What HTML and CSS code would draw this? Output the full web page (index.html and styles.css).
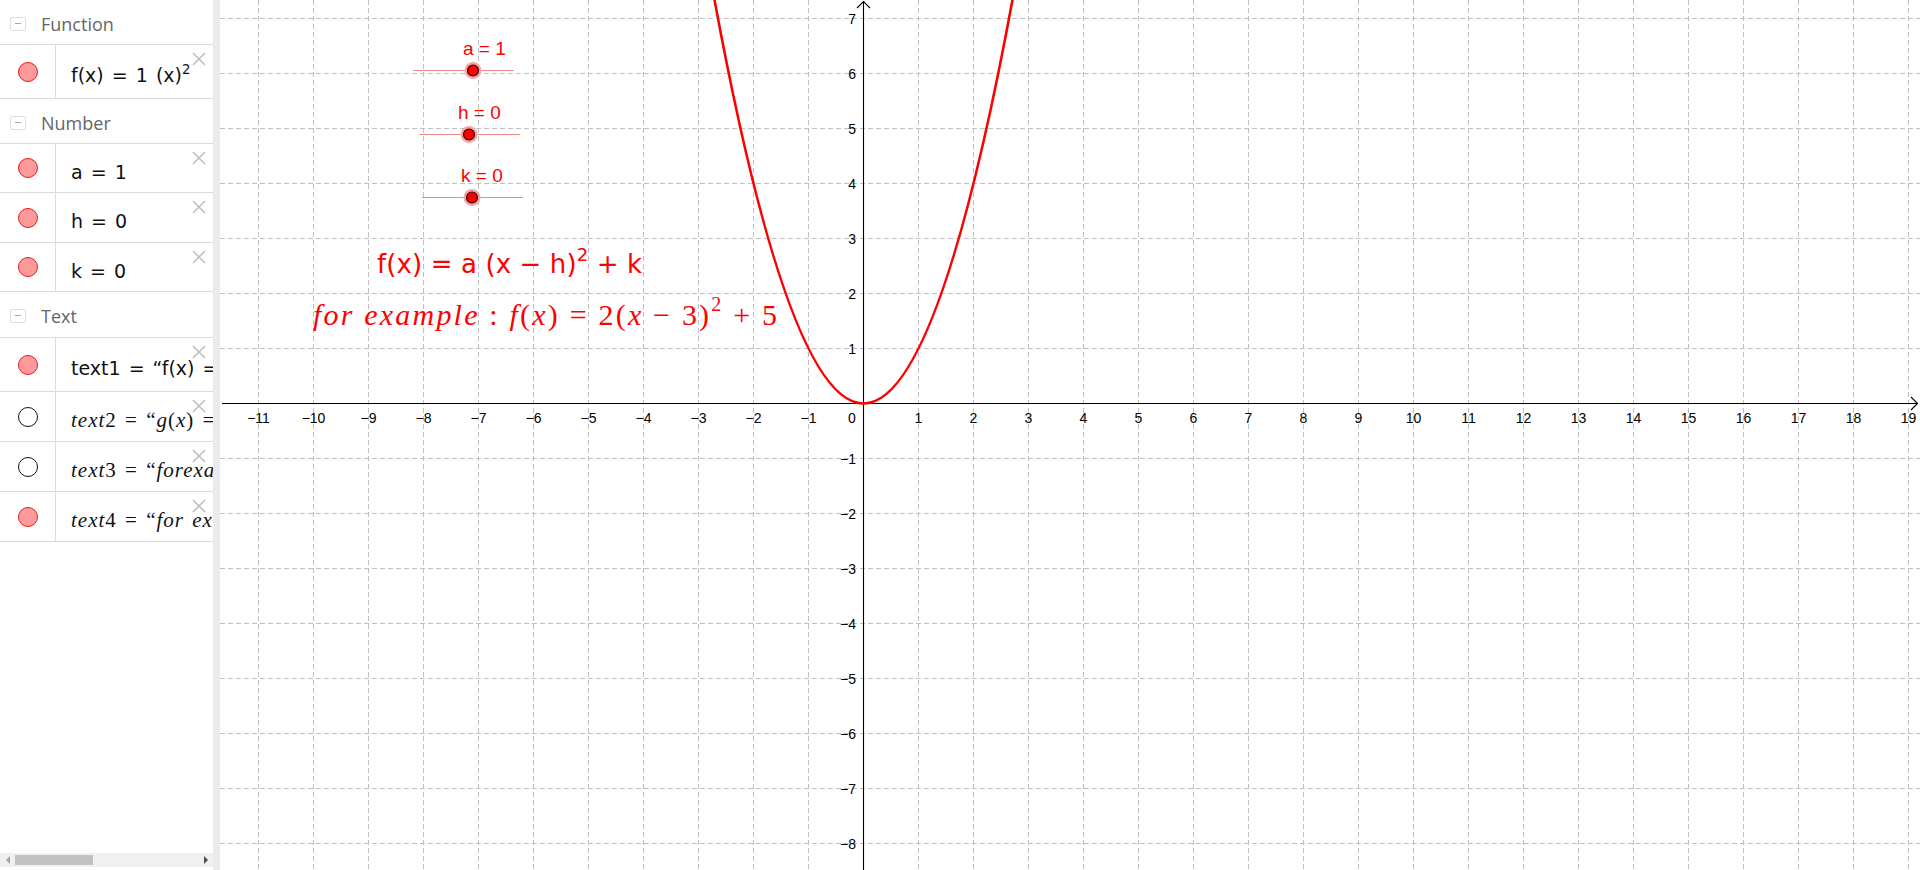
FILE: index.html
```html
<!DOCTYPE html>
<html lang="en">
<head>
<meta charset="utf-8">
<title>Vertex form</title>
<link rel="stylesheet" href="styles.css">
</head>
<body>
<div class="app">
  <aside class="algebra">
    <div class="av-list">
      <div class="group-head"><span class="toggle"></span><span class="group-title">Function</span></div>
      <div class="item tall">
        <div class="marble"><span class="dot"></span></div>
        <div class="formula">f(x) = 1 (x)<span class="sup">2</span></div>
        <svg class="close" viewBox="0 0 14 14"><path d="M1 1L13 13M13 1L1 13"/></svg>
      </div>
      <div class="group-head"><span class="toggle"></span><span class="group-title">Number</span></div>
      <div class="item compact">
        <div class="marble"><span class="dot"></span></div>
        <div class="formula">a = 1</div>
        <svg class="close" viewBox="0 0 14 14"><path d="M1 1L13 13M13 1L1 13"/></svg>
      </div>
      <div class="item">
        <div class="marble"><span class="dot"></span></div>
        <div class="formula">h = 0</div>
        <svg class="close" viewBox="0 0 14 14"><path d="M1 1L13 13M13 1L1 13"/></svg>
      </div>
      <div class="item compact">
        <div class="marble"><span class="dot"></span></div>
        <div class="formula">k = 0</div>
        <svg class="close" viewBox="0 0 14 14"><path d="M1 1L13 13M13 1L1 13"/></svg>
      </div>
      <div class="group-head wide"><span class="toggle"></span><span class="group-title">Text</span></div>
      <div class="item tall">
        <div class="marble"><span class="dot"></span></div>
        <div class="formula">text1 = “f(x) = a (x − h)<span class="sup">2</span> + k”</div>
        <svg class="close" viewBox="0 0 14 14"><path d="M1 1L13 13M13 1L1 13"/></svg>
      </div>
      <div class="item">
        <div class="marble"><span class="dot off"></span></div>
        <div class="formula serif">text<span class="up">2 = “</span>g<span class="up">(</span>x<span class="up">) = </span>a<span class="up">(</span>x <span class="up">−</span> h<span class="up">)</span></div>
        <svg class="close" viewBox="0 0 14 14"><path d="M1 1L13 13M13 1L1 13"/></svg>
      </div>
      <div class="item">
        <div class="marble"><span class="dot off"></span></div>
        <div class="formula serif">text<span class="up">3 = “</span>forexample</div>
        <svg class="close" viewBox="0 0 14 14"><path d="M1 1L13 13M13 1L1 13"/></svg>
      </div>
      <div class="item">
        <div class="marble"><span class="dot"></span></div>
        <div class="formula serif">text<span class="up">4 = “</span>for example</div>
        <svg class="close" viewBox="0 0 14 14"><path d="M1 1L13 13M13 1L1 13"/></svg>
      </div>
    </div>
    <div class="hscroll">
      <span class="arrow-box"><span class="arrow left"></span></span>
      <span class="thumb"></span>
      <span class="spacer"></span>
      <span class="arrow-box"><span class="arrow right"></span></span>
    </div>
  </aside>
  <div class="splitter"></div>
  <main class="graphics">
    <svg class="canvas" width="1700" height="870" viewBox="0 0 1700 870">
      <path class="grid" d="M38.5 0V870M93.5 0V870M148.5 0V870M203.5 0V870M258.5 0V870M313.5 0V870M368.5 0V870M423.5 0V870M478.5 0V870M533.5 0V870M588.5 0V870M698.5 0V870M753.5 0V870M808.5 0V870M863.5 0V870M918.5 0V870M973.5 0V870M1028.5 0V870M1083.5 0V870M1138.5 0V870M1193.5 0V870M1248.5 0V870M1303.5 0V870M1358.5 0V870M1413.5 0V870M1468.5 0V870M1523.5 0V870M1578.5 0V870M1633.5 0V870M1688.5 0V870"/>
      <path class="grid" d="M0 18.5H1700M0 73.5H1700M0 128.5H1700M0 183.5H1700M0 238.5H1700M0 293.5H1700M0 348.5H1700M0 458.5H1700M0 513.5H1700M0 568.5H1700M0 623.5H1700M0 678.5H1700M0 733.5H1700M0 788.5H1700M0 843.5H1700"/>
      <path class="axis" d="M2 403.5H1697M1691 397L1697.5 403.5L1691 410M643.5 870V1.5M637 8L643.5 1.5L650 8"/>
      <g class="tick tick-x">
        <text x="38.5" y="423">−11</text>
        <text x="93.5" y="423">−10</text>
        <text x="148.5" y="423">−9</text>
        <text x="203.5" y="423">−8</text>
        <text x="258.5" y="423">−7</text>
        <text x="313.5" y="423">−6</text>
        <text x="368.5" y="423">−5</text>
        <text x="423.5" y="423">−4</text>
        <text x="478.5" y="423">−3</text>
        <text x="533.5" y="423">−2</text>
        <text x="588.5" y="423">−1</text>
        <text x="632" y="423">0</text>
        <text x="698.5" y="423">1</text>
        <text x="753.5" y="423">2</text>
        <text x="808.5" y="423">3</text>
        <text x="863.5" y="423">4</text>
        <text x="918.5" y="423">5</text>
        <text x="973.5" y="423">6</text>
        <text x="1028.5" y="423">7</text>
        <text x="1083.5" y="423">8</text>
        <text x="1138.5" y="423">9</text>
        <text x="1193.5" y="423">10</text>
        <text x="1248.5" y="423">11</text>
        <text x="1303.5" y="423">12</text>
        <text x="1358.5" y="423">13</text>
        <text x="1413.5" y="423">14</text>
        <text x="1468.5" y="423">15</text>
        <text x="1523.5" y="423">16</text>
        <text x="1578.5" y="423">17</text>
        <text x="1633.5" y="423">18</text>
        <text x="1688.5" y="423">19</text>
      </g>
      <g class="tick tick-y">
        <text x="636" y="24">7</text>
        <text x="636" y="79">6</text>
        <text x="636" y="134">5</text>
        <text x="636" y="189">4</text>
        <text x="636" y="244">3</text>
        <text x="636" y="299">2</text>
        <text x="636" y="354">1</text>
        <text x="636" y="464">−1</text>
        <text x="636" y="519">−2</text>
        <text x="636" y="574">−3</text>
        <text x="636" y="629">−4</text>
        <text x="636" y="684">−5</text>
        <text x="636" y="739">−6</text>
        <text x="636" y="794">−7</text>
        <text x="636" y="849">−8</text>
      </g>
      <path class="curve" d="M489.5 -27.7Q643.5 834.7 797.5 -27.7"/>
      <g class="slider">
        <line class="track" x1="193" y1="70.5" x2="294" y2="70.5"/>
        <circle class="halo" cx="253" cy="70.5" r="8.5"/>
        <circle class="knob" cx="253" cy="70.5" r="5.5"/>
        <text class="slider-label" x="243" y="55">a = 1</text>
      </g>
      <g class="slider">
        <line class="track" x1="199" y1="134.5" x2="300" y2="134.5"/>
        <circle class="halo" cx="249" cy="134.5" r="8.5"/>
        <circle class="knob" cx="249" cy="134.5" r="5.5"/>
        <text class="slider-label" x="238" y="119">h = 0</text>
      </g>
      <g class="slider">
        <line class="track" x1="202" y1="197.5" x2="303" y2="197.5"/>
        <circle class="halo" cx="252" cy="197.5" r="8.5"/>
        <circle class="knob" cx="252" cy="197.5" r="5.5"/>
        <text class="slider-label" x="241" y="182">k = 0</text>
      </g>
      <text class="formula-sans" x="157" y="273" textLength="265" lengthAdjust="spacing">f(x) = a (x − h)<tspan class="sup-svg" dy="-12">2</tspan><tspan dy="12"> + k</tspan></text>
      <text class="formula-serif" x="93" y="325" textLength="464" lengthAdjust="spacing">for example <tspan class="up">:</tspan> f<tspan class="up">(</tspan>x<tspan class="up">) = 2(</tspan>x<tspan class="up"> − 3)</tspan><tspan class="up sup-serif" dy="-14">2</tspan><tspan class="up" dy="14"> + 5</tspan></text>
    </svg>
  </main>
</div>
</body>
</html>
```
FILE: styles.css
```css
html, body {
  margin: 0;
  padding: 0;
  height: 100%;
}

body {
  font-family: "DejaVu Sans", sans-serif;
  background: #fff;
  overflow: hidden;
}

.app {
  display: flex;
  width: 1920px;
  height: 870px;
}

/* ---------- Algebra view ---------- */
.algebra {
  width: 213px;
  flex: none;
  display: flex;
  flex-direction: column;
  background: #fff;
}

.av-list {
  flex: 1;
  overflow: hidden;
}

.group-head {
  height: 45px;
  box-sizing: border-box;
  border-bottom: 1px solid #dcdcdc;
  display: flex;
  align-items: center;
  gap: 15px;
  padding: 3px 0 0 10px;
}

.group-head.wide {
  height: 46px;
}

.toggle {
  position: relative;
  width: 16px;
  height: 14px;
  box-sizing: border-box;
  border: 1px solid #dedede;
  border-radius: 2px;
  flex: none;
}

.toggle::after {
  content: "";
  position: absolute;
  left: 4px;
  right: 4px;
  top: 5px;
  height: 1px;
  background: #aaa;
}

.group-title {
  font-family: "Open Sans", sans-serif;
  font-size: 18px;
  color: #666;
}

.item {
  position: relative;
  display: flex;
  height: 50px;
  box-sizing: border-box;
  border-bottom: 1px solid #dcdcdc;
  overflow: hidden;
}

.item.tall {
  height: 54px;
}

.item.compact {
  height: 49px;
}

.marble {
  width: 56px;
  flex: none;
  box-sizing: border-box;
  border-right: 1px solid #dcdcdc;
  display: flex;
  align-items: center;
  justify-content: center;
}

.dot {
  width: 20px;
  height: 20px;
  border-radius: 50%;
  box-sizing: border-box;
  border: 1px solid #e31b1b;
  background: #ff9a9a;
}

.dot.off {
  background: #fff;
  border-color: #111;
}

.formula {
  padding: 16px 0 0 15px;
  font-size: 19px;
  line-height: 24px;
  color: #111;
  white-space: nowrap;
  word-spacing: 2px;
}

.item.tall .formula {
  padding-top: 18px;
}

.formula.serif {
  font-family: "Liberation Serif", serif;
  font-style: italic;
  font-size: 21px;
  letter-spacing: 1px;
}

.up {
  font-style: normal;
}

.sup {
  font-size: 0.7em;
  vertical-align: 0.6em;
  line-height: 0;
}

.close {
  position: absolute;
  right: 7px;
  top: 7px;
  width: 14px;
  height: 14px;
  fill: none;
  stroke: #bdbdbd;
  stroke-width: 1.5;
}

.hscroll {
  height: 14px;
  margin-bottom: 3px;
  background: #f0f0f0;
  display: flex;
  align-items: center;
}

.arrow-box {
  width: 15px;
  height: 14px;
  flex: none;
  display: flex;
  align-items: center;
  justify-content: center;
}

.arrow {
  width: 0;
  height: 0;
  border-top: 4px solid transparent;
  border-bottom: 4px solid transparent;
}

.arrow.left {
  border-right: 4px solid #a3a3a3;
}

.arrow.right {
  border-left: 4px solid #505050;
}

.thumb {
  width: 78px;
  height: 10px;
  background: #c1c1c1;
  flex: none;
}

.spacer {
  flex: 1;
}

.splitter {
  width: 7px;
  flex: none;
  background: #ebebeb;
}

/* ---------- Graphics view ---------- */
.graphics {
  flex: 1;
  position: relative;
  overflow: hidden;
  background: #fff;
}

.canvas {
  display: block;
}

.grid {
  fill: none;
  stroke: #c0c0c0;
  stroke-width: 1;
  stroke-dasharray: 5 3;
}

.axis {
  fill: none;
  stroke: #000;
  stroke-width: 1.1;
}

.tick {
  font-family: "Liberation Sans", Arial, sans-serif;
  font-size: 14px;
  fill: #000;
}

.tick-x {
  text-anchor: middle;
}

.tick-y {
  text-anchor: end;
}

.curve {
  fill: none;
  stroke: #ff0000;
  stroke-width: 2.6;
}

.track {
  stroke: #f08a8a;
  stroke-width: 1;
}

.halo {
  fill: #f5a3a3;
}

.knob {
  fill: #ff0000;
  stroke: #2b0a0a;
  stroke-width: 1.2;
}

.slider-label {
  font-family: "Liberation Sans", Arial, sans-serif;
  font-size: 19px;
  fill: #ff0000;
}

.formula-sans {
  font-family: "DejaVu Sans", sans-serif;
  font-size: 26px;
  fill: #ff0000;
}

.sup-svg {
  font-size: 18px;
}

.formula-serif {
  font-family: "Liberation Serif", serif;
  font-style: italic;
  font-size: 30px;
  fill: #ff0000;
}

.sup-serif {
  font-size: 20px;
}
```
